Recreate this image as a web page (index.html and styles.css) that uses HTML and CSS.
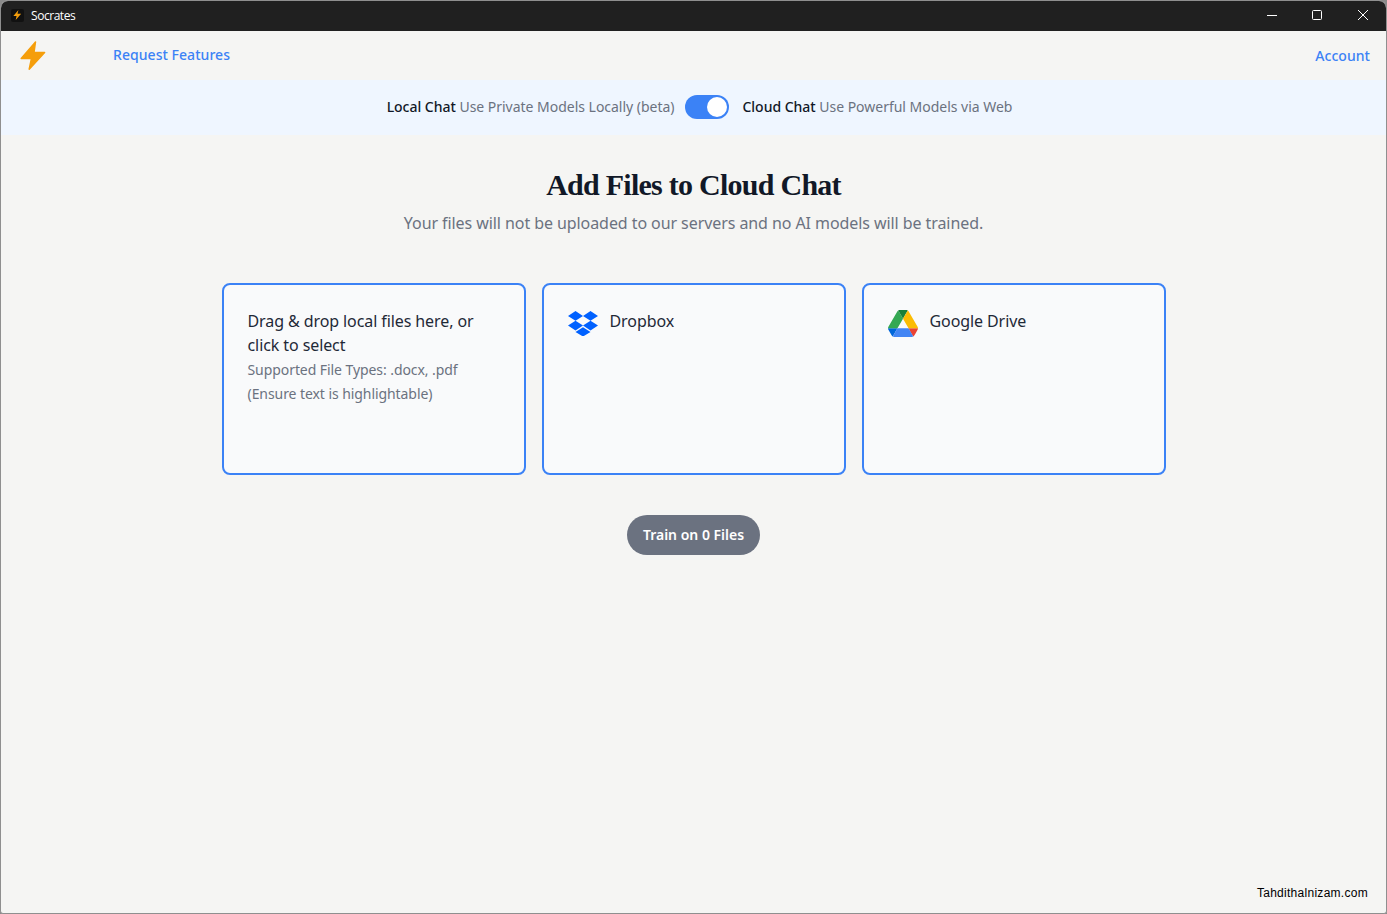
FILE: index.html
```html
<!DOCTYPE html>
<html lang="en">
<head>
<meta charset="utf-8">
<title>Socrates</title>
<link rel="stylesheet" href="styles.css">
</head>
<body>
<div class="window">
  <header class="titlebar">
    <div class="app-id">
      <span class="app-icon">
        <svg viewBox="0 0 24 24" width="11" height="12"><path fill="#f59e0b" d="M14 1 3 14h7l-2 9 12-14h-8z"/></svg>
      </span>
      <span class="app-name">Socrates</span>
    </div>
    <div class="controls">
      <span class="ctl"><svg width="12" height="12" viewBox="0 0 12 12"><path d="M1 6.5h10" stroke="#fff" fill="none"/></svg></span>
      <span class="ctl ctl-max"><svg width="12" height="12" viewBox="0 0 12 12"><rect x="1.5" y="1.5" width="9" height="9" rx="1" stroke="#fff" fill="none"/></svg></span>
      <span class="ctl"><svg width="12" height="12" viewBox="0 0 12 12"><path d="M1 1l10 10M11 1 1 11" stroke="#fff" fill="none"/></svg></span>
    </div>
  </header>
  <nav class="nav">
    <div class="nav-left">
      <svg class="logo" viewBox="0 0 26 30" width="26" height="30"><path fill="#f59e0b" stroke="#f59e0b" stroke-width="1.5" stroke-linejoin="round" d="M15.5 1 1.2 17.5h10.3L9.2 28.2 24.6 11.5H14z"/></svg>
      <a class="link">Request Features</a>
    </div>
    <a class="link account">Account</a>
  </nav>
  <section class="banner">
    <span class="mode"><b>Local Chat</b> Use Private Models Locally (beta)</span>
    <span class="toggle"><span class="knob"></span></span>
    <span class="mode"><b>Cloud Chat</b> Use Powerful Models via Web</span>
  </section>
  <main class="main">
    <h1>Add Files to Cloud Chat</h1>
    <p class="sub">Your files will not be uploaded to our servers and no AI models will be trained.</p>
    <div class="cards">
      <div class="card">
        <div class="card-title">Drag &amp; drop local files here, or click to select</div>
        <div class="hint">Supported File Types: .docx, .pdf</div>
        <div class="hint">(Ensure text is highlightable)</div>
      </div>
      <div class="card">
        <div class="source">
          <svg class="src-icon" viewBox="0 0 30 26" width="30" height="26"><path fill="#0061ff" d="M7.5 1 0 5.9l7.5 4.8 7.5-4.8zM22.5 1 15 5.9l7.5 4.8 7.5-4.8zM0 15.6l7.5 4.8 7.5-4.8-7.5-4.9zM22.5 10.7 15 15.6l7.5 4.8 7.5-4.8zM7.5 22.1l7.5 4.4 7.5-4.4-7.5-4.8z"/></svg>
          <span class="card-title">Dropbox</span>
        </div>
      </div>
      <div class="card">
        <div class="source">
          <svg class="src-icon" viewBox="0 0 87.3 78" width="30" height="27">
            <path d="m6.6 66.85 3.85 6.65c.8 1.4 1.95 2.5 3.3 3.3L27.5 53H0c0 1.55.4 3.1 1.2 4.5z" fill="#0066da"/>
            <path d="M43.65 25 29.9 1.2c-1.35.8-2.5 1.9-3.3 3.3L1.2 48.5A9 9 0 0 0 0 53h27.5z" fill="#34a853"/>
            <path d="M73.55 76.8c1.35-.8 2.5-1.9 3.3-3.3l1.6-2.75 7.65-13.25c.8-1.4 1.2-2.95 1.2-4.5H59.8l5.85 11.5z" fill="#ea4335"/>
            <path d="M43.65 25 57.4 1.2C56.05.4 54.5 0 52.9 0H34.4c-1.6 0-3.15.45-4.5 1.2z" fill="#188038"/>
            <path d="M59.8 53H27.5L13.75 76.8c1.35.8 2.9 1.2 4.5 1.2h50.8c1.6 0 3.15-.45 4.5-1.2z" fill="#4285f4"/>
            <path d="M73.4 26.5 60.7 4.5c-.8-1.4-1.95-2.5-3.3-3.3L43.65 25 59.8 53h27.45c0-1.55-.4-3.1-1.2-4.5z" fill="#fbbc04"/>
          </svg>
          <span class="card-title">Google Drive</span>
        </div>
      </div>
    </div>
    <button class="train">Train on 0 Files</button>
  </main>
  <footer class="credit">Tahdithalnizam.com</footer>
</div>
</body>
</html>
```
FILE: styles.css
```css
* { box-sizing: border-box; }
html, body { margin: 0; height: 100%; background: #8a8a8a; }
body { font-family: "Noto Sans", sans-serif; color: #111827; overflow: hidden; }
.window {
  height: 914px;
  display: flex;
  flex-direction: column;
  position: relative;
  background: #f5f5f3;
  border: 1px solid #8f8f8f;
  border-radius: 8px 8px 3px 3px;
  overflow: hidden;
}
.titlebar {
  height: 30px;
  flex: none;
  background: #202020;
  display: flex;
  align-items: center;
  justify-content: space-between;
  padding-bottom: 2px;
}
.app-id { display: flex; align-items: center; padding-left: 10px; gap: 7px; }
.app-icon {
  width: 13px; height: 13px; border-radius: 2px; background: #111;
  display: flex; align-items: center; justify-content: center;
}
.app-name { font-family: "Open Sans", sans-serif; font-size: 12px; letter-spacing: -0.45px; color: #fff; }
.controls { display: flex; height: 100%; }
.ctl { width: 45.5px; display: flex; align-items: center; justify-content: center; }
.ctl-max { padding-right: 2px; }
.nav {
  height: 49px;
  flex: none;
  display: flex;
  justify-content: space-between;
  align-items: center;
  padding: 0 16px 0 19px;
}
.nav-left { display: flex; align-items: center; }
.logo { display: block; }
.link { color: #3b82f6; font-size: 14px; font-weight: 500; letter-spacing: 0.05px; }
.nav-left .link { margin-left: 67px; margin-top: -2px; }
.banner {
  height: 55px;
  flex: none;
  background: #eff6ff;
  display: flex;
  align-items: center;
  justify-content: center;
  gap: 11px;
  font-size: 14px;
  padding: 0 0 3px 12px;
}
.mode { color: #6b7280; white-space: nowrap; letter-spacing: -0.02px; }
.mode b { font-weight: 500; color: #111827; }
.toggle {
  width: 44px; height: 24px; border-radius: 12px; background: #3b82f6;
  display: flex; align-items: center; justify-content: flex-end; padding-right: 2px;
  margin: 2px 2px 0 0;
}
.knob { width: 20px; height: 20px; border-radius: 50%; background: #fff; }
.main { flex: 1; display: flex; flex-direction: column; align-items: center; padding-top: 32px; }
h1 {
  font-family: "Liberation Serif", serif;
  font-size: 30px; line-height: 36px; font-weight: 700; margin: 0;
  letter-spacing: -0.74px;
  color: #111827;
}
.sub { font-size: 16px; line-height: 24px; color: #6b7280; margin: 8px 0 0; letter-spacing: -0.075px; }
.cards { display: flex; gap: 16px; margin-top: 48px; }
.card {
  width: 304px; height: 192px;
  background: #f9fafb;
  border: 2px solid #3b82f6;
  border-radius: 8px;
  padding: 24px;
}
.card-title { font-size: 16px; line-height: 24px; color: #1f2937; letter-spacing: -0.09px; }
.hint { font-size: 14px; line-height: 24px; color: #6b7280; letter-spacing: -0.07px; position: relative; top: 1px; }
.source { display: flex; align-items: center; gap: 12px; height: 24px; }
.src-icon { flex: none; margin-top: 4px; }
.train {
  margin-top: 40px;
  height: 40px;
  padding: 0 16px 2px;
  border: 0;
  border-radius: 20px;
  background: #6b7280;
  color: #fff;
  font-family: inherit;
  font-size: 14px;
  font-weight: 600;
}
.credit {
  position: absolute;
  right: 18px; bottom: 13px;
  font-family: "Liberation Sans", sans-serif;
  font-size: 12px;
  line-height: 14px;
  letter-spacing: 0.28px;
  color: #000;
}
```
